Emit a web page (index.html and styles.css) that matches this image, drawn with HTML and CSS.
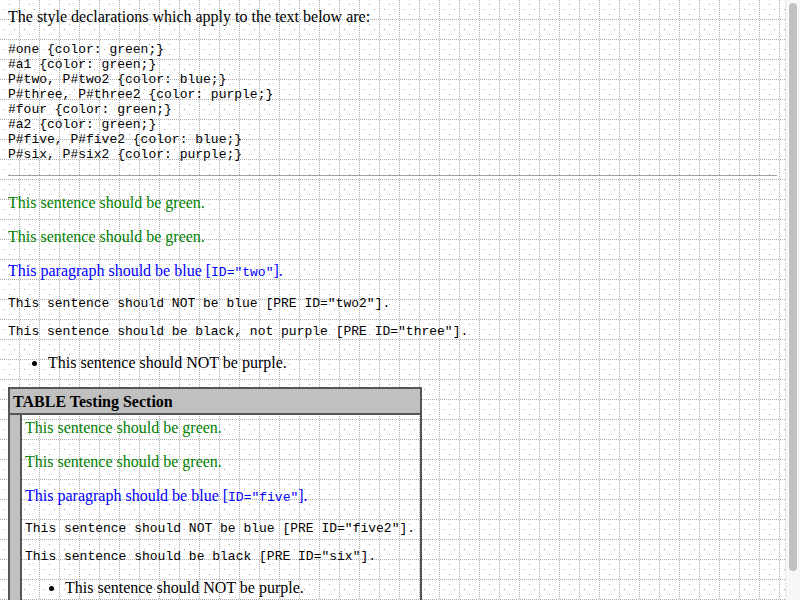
FILE: index.html
```html
<!DOCTYPE html>
<html lang="en">
<head>
<meta charset="utf-8">
<title>CSS1 Test Suite: ID selectors</title>
<link rel="stylesheet" href="styles.css">
</head>
<body class="page">
<p class="intro">The style declarations which apply to the text below are:</p>
<pre class="decl">#one {color: green;}
#a1 {color: green;}
P#two, P#two2 {color: blue;}
P#three, P#three2 {color: purple;}
#four {color: green;}
#a2 {color: green;}
P#five, P#five2 {color: blue;}
P#six, P#six2 {color: purple;}</pre>
<hr class="rule">
<p class="text green">This sentence should be green.</p>
<p class="text green">This sentence should be green.</p>
<p class="text blue">This paragraph should be blue [<code class="mono">ID="two"</code>].</p>
<pre class="sample">This sentence should NOT be blue [PRE ID="two2"].</pre>
<pre class="sample">This sentence should be black, not purple [PRE ID="three"].</pre>
<ul class="list"><li>This sentence should NOT be purple.</li></ul>
<table class="tabletest">
<tr><td colspan="2" class="head"><strong>TABLE Testing Section</strong></td></tr>
<tr><td class="side">&nbsp;</td><td class="content">
<p class="text green">This sentence should be green.</p>
<p class="text green">This sentence should be green.</p>
<p class="text blue">This paragraph should be blue [<code class="mono">ID="five"</code>].</p>
<pre class="sample">This sentence should NOT be blue [PRE ID="five2"].</pre>
<pre class="sample">This sentence should be black [PRE ID="six"].</pre>
<ul class="list"><li>This sentence should NOT be purple.</li></ul>
</td></tr>
</table>
<div class="scrollbar" aria-hidden="true"><div class="thumb"></div></div>
</body>
</html>
```
FILE: styles.css
```css
html {
  background-color: #ffffff;
  background-image: url("data:image/svg+xml,%3Csvg xmlns='http://www.w3.org/2000/svg' width='20' height='20' shape-rendering='crispEdges'%3E%3Cpath d='M19.5 0V20M0 19.5H20' stroke='%23aaaaaa' stroke-width='1' stroke-dasharray='1 1' fill='none'/%3E%3Cpath d='M9 4h1v1H9zM4 9h1v1H4zM14 9h1v1h-1zM9 14h1v1H9z' fill='%23aaaaaa'/%3E%3C/svg%3E");
  background-repeat: repeat;
  background-position: 0 0;
}

.page {
  margin: 8px 23px 8px 8px;
  font-family: "Liberation Serif", "Times New Roman", serif;
  font-size: 16px;
  line-height: 18px;
  color: #000000;
  background: transparent;
}

.scrollbar {
  position: fixed;
  top: 0;
  right: 0;
  width: 15px;
  height: 100%;
  box-sizing: border-box;
  background: #f7f7f7;
  border-left: 1px solid #e6e6e6;
}

.thumb {
  margin: 3px 3px 0 3px;
  height: 568px;
  border-radius: 4px;
  background: #c1c1c1;
}

.intro {
  margin: 0 0 16px 0;
}

.text {
  margin: 15px 0;
  padding-top: 1px;
}

.decl,
.sample {
  font-family: "Liberation Mono", "Courier New", monospace;
  font-size: 13px;
  line-height: 15px;
  margin: 13px 0;
}

.text + .sample {
  margin-top: 16px;
}

.mono {
  font-family: "Liberation Mono", "Courier New", monospace;
  font-size: 13px;
  line-height: 1;
}

.rule {
  border: 0;
  border-top: 1px solid #a0a0a0;
  border-bottom: 1px solid #ffffff;
  height: 0;
  margin: 8px 0 16px 0;
}

.green {
  color: #008000;
}

.blue {
  color: #0000ff;
}

.list {
  margin: 15px 0 15px 0;
  padding-left: 40px;
}

.tabletest {
  border-collapse: separate;
  border-spacing: 0;
  border: 1px solid #555555;
}

.tabletest td {
  border: 1px solid #555555;
  padding: 3px;
}

.tabletest .head {
  background: #c0c0c0;
  text-align: left;
  padding: 4px 3px 2px 3px;
}

.side {
  background: #c0c0c0;
}

.tabletest .content {
  vertical-align: top;
  padding-right: 5px;
}

.content > .text:first-child {
  margin-top: 0;
}

.content > .list:last-child {
  margin-bottom: 0;
}
```
